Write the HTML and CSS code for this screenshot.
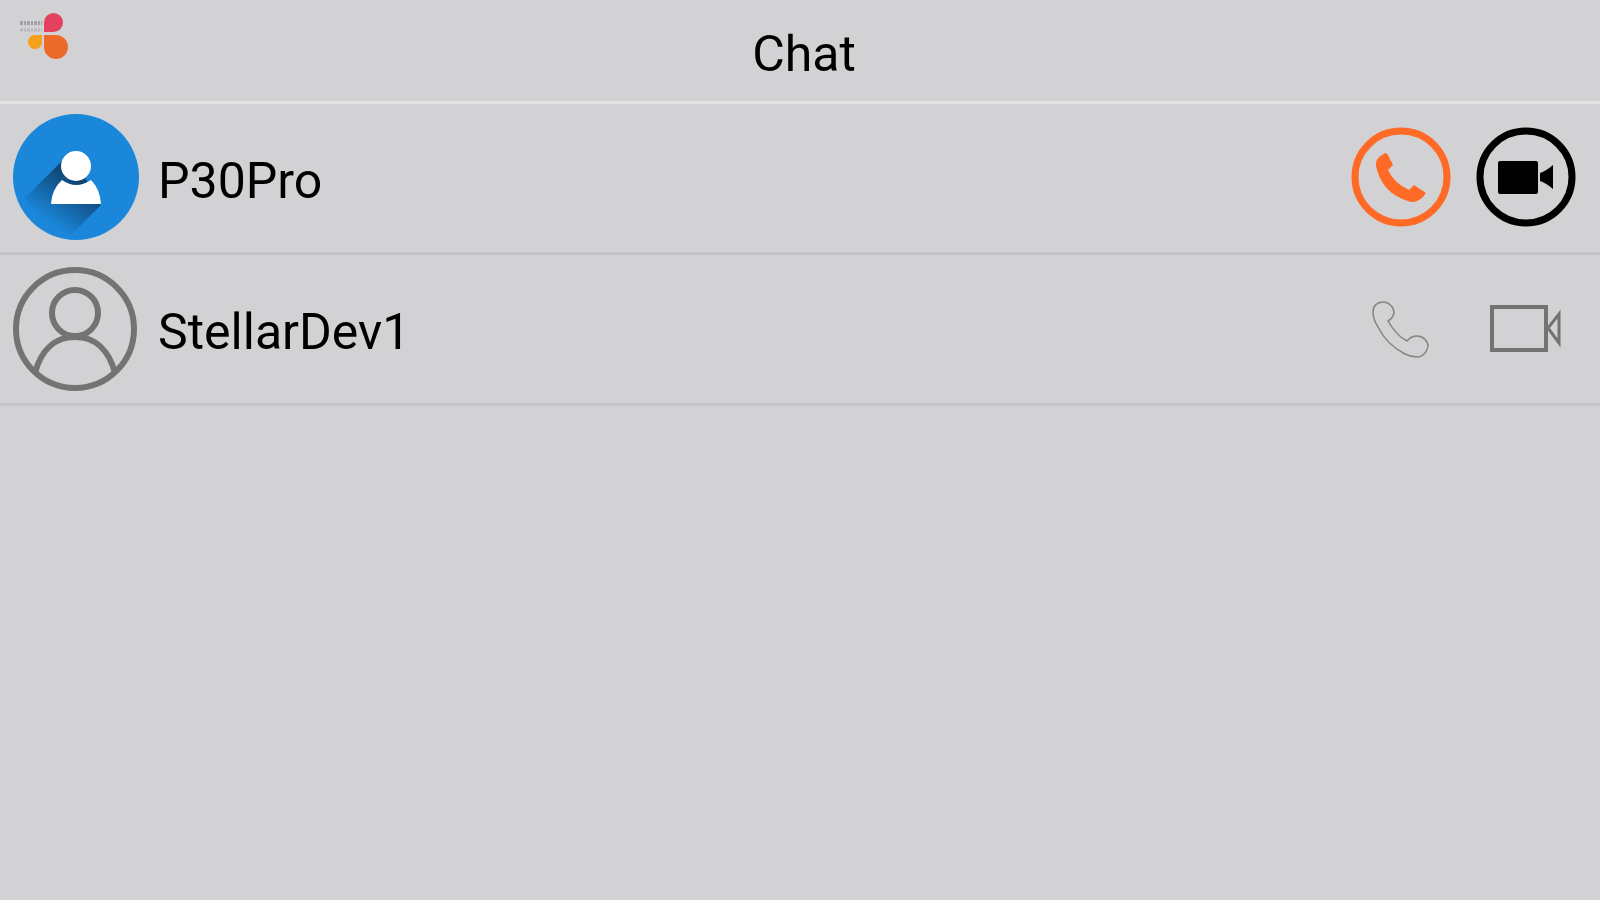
FILE: index.html
```html
<!DOCTYPE html>
<html lang="en">

<head>
    <meta charset="UTF-8">
    <meta name="viewport" content="width=device-width, initial-scale=1.0">
    <title>Chat</title>
    <link rel="stylesheet" href="styles.css">
</head>

<body>
    <header class="header">
        <svg class="logo" viewBox="0 0 52 50" aria-hidden="true">
            <path class="logo-line" d="M2 11H24" />
            <path class="logo-line logo-line-light" d="M2 18H24" />
            <path fill="#e2415f" d="M26 20V10.500A9.500 9.500 0 1 1 35.500 20Z" />
            <path fill="#f6a01c" d="M24 23V29.500A7 7 0 1 1 17 23Z" />
            <path fill="#ec6a2c" d="M26 23H38A12 12 0 1 1 26 35Z" />
        </svg>
        <h1 class="title">Chat</h1>
    </header>

    <main>
        <ul class="contacts">
            <li class="contact">
                <svg class="avatar" viewBox="0 0 126 126" aria-hidden="true">
                    <defs>
                        <linearGradient id="shadow" gradientUnits="userSpaceOnUse" x1="62" y1="64" x2="32" y2="106">
                            <stop offset="0" stop-color="#0f4473" />
                            <stop offset="1" stop-color="#1b87da" />
                        </linearGradient>
                    </defs>
                    <circle cx="63" cy="63" r="63" fill="#1b87da" />
                    <path fill="url(#shadow)" d="M49 47L12 84Q24 112 57 122L88 91L70 60Z" />
                    <circle cx="63" cy="52" r="15" fill="#fff" />
                    <path fill="#fff" d="M38 90Q39 75 49 66Q63 76 78 66Q87 75 88 90Z" />
                </svg>
                <span class="name">P30Pro</span>
                <div class="actions">
                    <button class="action call" type="button" aria-label="Call P30Pro">
                        <svg viewBox="0 0 100 100">
                            <circle cx="50" cy="50" r="46" fill="none" stroke="#ff6b26" stroke-width="7" />
                            <path fill="#ff6b26" d="M34 26Q36 26 37 28L42 38L37 43Q43 56 58 63L63 58L75 66Q71 72 66 74Q62 76 57 74Q33 67 26 43Q23 35 28 30Z" />
                        </svg>
                    </button>
                    <button class="action video" type="button" aria-label="Video call P30Pro">
                        <svg viewBox="0 0 100 100">
                            <circle cx="50" cy="50" r="46" fill="none" stroke="#000" stroke-width="7" />
                            <rect x="22" y="34" width="40" height="33" rx="2" />
                            <path d="M64 46Q70 44 77 38V62Q70 56 64 54Z" />
                        </svg>
                    </button>
                </div>
            </li>
            <li class="contact">
                <svg class="avatar" viewBox="0 0 126 126" aria-hidden="true">
                    <g fill="none" stroke="#737373" stroke-width="6">
                        <circle cx="62" cy="64" r="59" />
                        <circle cx="62" cy="48" r="23" />
                        <path d="M22 108C28 85 42 72 62 72S96 85 102 108" />
                    </g>
                </svg>
                <span class="name">StellarDev1</span>
                <div class="actions">
                    <button class="action call" type="button" aria-label="Call StellarDev1">
                        <svg viewBox="0 0 100 100">
                            <path fill="none" stroke="#858585" stroke-width="1.500" d="M32 24C38 24 43 29 43 35Q42 40 37 43C41 50 48 59 56 63Q60 58 66 58C72 58 77 63 77 68C76 74 72 79 66 79Q60 79 54 76Q36 67 27 49Q22 41 22 34C22 28 26 24 32 24Z" />
                        </svg>
                    </button>
                    <button class="action video" type="button" aria-label="Video call StellarDev1">
                        <svg viewBox="0 0 100 100">
                            <g fill="none" stroke="#737373">
                                <rect x="16" y="29" width="54" height="43" stroke-width="4" />
                                <path stroke-width="3" d="M72 50L83 36V65Z" />
                            </g>
                        </svg>
                    </button>
                </div>
            </li>
        </ul>
    </main>
</body>

</html>
```

FILE: styles.css
```css
* {
    box-sizing: border-box;
}

body {
    margin: 0;
    min-height: 100vh;
    background-color: #d2d2d4;
    color: #000;
    font-family: Roboto, "Liberation Sans", sans-serif;
}

.header {
    display: grid;
    grid-template-columns: 52px 1fr 52px;
    padding: 12px 10px 27px 18px;
    border-bottom: 3px solid #e1e1e2;
}

.logo {
    width: 52px;
    height: 50px;
}

.logo-line {
    fill: none;
    stroke: #a2a2a5;
    stroke-width: 4;
    stroke-dasharray: 3 1 2 1;
}

.logo-line-light {
    stroke: #b8b8bb;
    stroke-width: 3;
}

.title {
    margin: 12px 0 0;
    text-align: center;
    font-size: 50px;
    font-weight: 400;
    line-height: 60px;
    height: 50px;
}

.contacts {
    margin: 0;
    padding: 0;
    list-style: none;
}

.contact {
    display: flex;
    align-items: center;
    padding: 10px 24px 12px 13px;
    border-bottom: 3px solid #c4c4c6;
}

.avatar {
    flex: none;
    width: 126px;
    height: 126px;
}

.name {
    flex: 1;
    padding: 8px 0 0 19px;
    font-size: 50px;
    line-height: 60px;
}

.actions {
    display: flex;
    gap: 25px;
}

.action {
    padding: 0;
    width: 100px;
    height: 100px;
    border: none;
    background: none;
    cursor: pointer;
}

.action svg {
    display: block;
    width: 100%;
    height: 100%;
}
```
